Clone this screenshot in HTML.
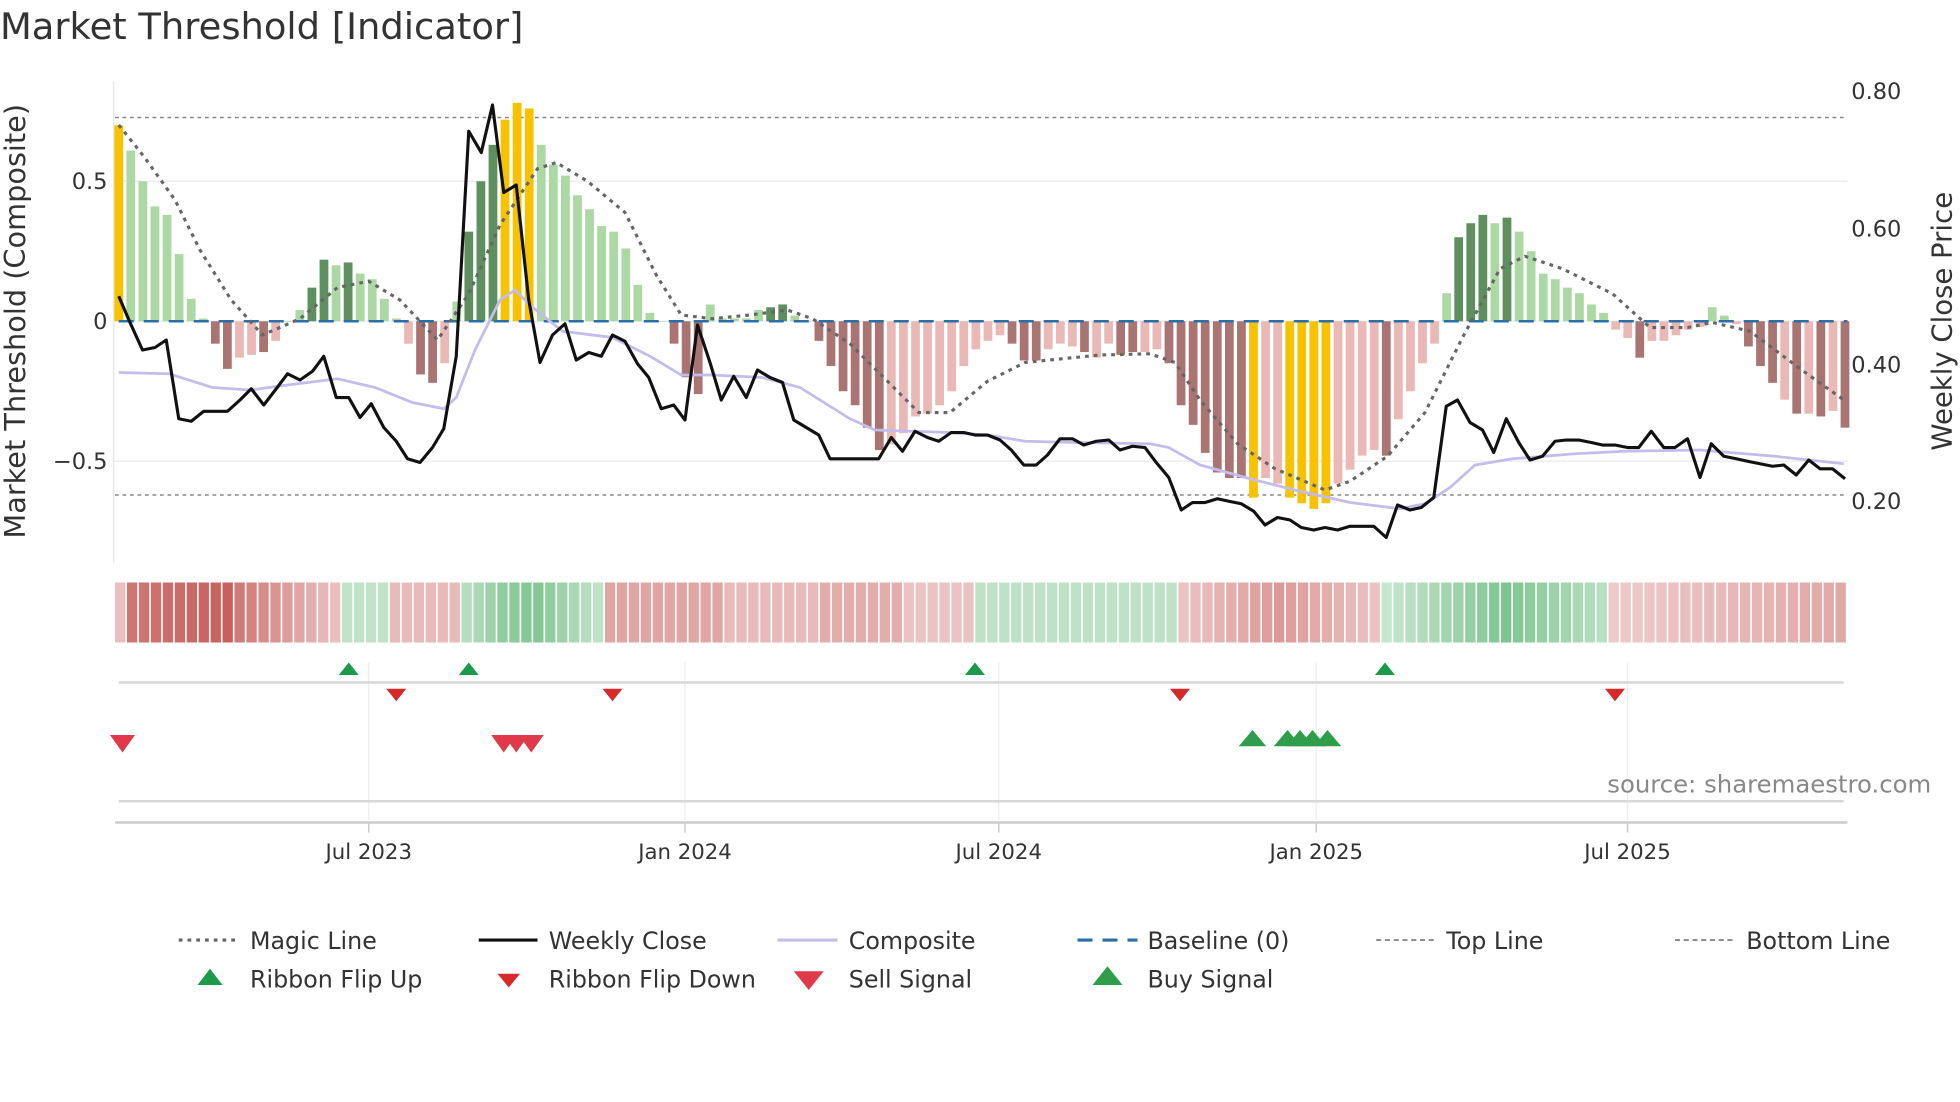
<!DOCTYPE html>
<html><head><meta charset="utf-8"><style>
html,body{margin:0;padding:0;background:#fff;}
svg{display:block;font-family:"DejaVu Sans","Liberation Sans",sans-serif;}
</style></head><body>
<svg id="s" width="1960" height="1102" viewBox="0 0 1568 881.6" xmlns="http://www.w3.org/2000/svg">
<text x="0" y="31" font-size="29.5" fill="#333">Market Threshold [Indicator]</text>
<g id="grid"></g>
<g id="bars"></g>
<g id="lines"></g>
<g id="rib"></g>
<g id="mk"></g>
<text x="20" y="257" font-size="23" fill="#333" text-anchor="middle" transform="rotate(-90 20 257)">Market Threshold (Composite)</text>
<text x="1561" y="257" font-size="22" fill="#333" text-anchor="middle" transform="rotate(-90 1561 257)">Weekly Close Price</text>
<g font-size="18" fill="#333" text-anchor="end">
<text x="86" y="151">0.5</text><text x="86" y="263">0</text><text x="86" y="375">−0.5</text>
</g>
<g font-size="18" fill="#333">
<text x="1481" y="79">0.80</text><text x="1481" y="189">0.60</text><text x="1481" y="298">0.40</text><text x="1481" y="407">0.20</text>
</g>
<g font-size="17" fill="#333" text-anchor="middle">
<text x="295" y="687">Jul 2023</text><text x="548" y="687">Jan 2024</text><text x="799" y="687">Jul 2024</text><text x="1053" y="687">Jan 2025</text><text x="1302" y="687">Jul 2025</text>
</g>
<text x="1545" y="634" font-size="19.5" fill="#888" text-anchor="end">source: sharemaestro.com</text>
<g font-size="19" fill="#333">
<line x1="143" y1="752" x2="188" y2="752" stroke="#666" stroke-width="2.5" stroke-dasharray="3,4"/><text x="200" y="759">Magic Line</text>
<line x1="383" y1="752" x2="430" y2="752" stroke="#111" stroke-width="2.5"/><text x="439" y="759">Weekly Close</text>
<line x1="622" y1="752" x2="670" y2="752" stroke="#c3bcec" stroke-width="2.5"/><text x="679" y="759">Composite</text>
<line x1="862" y1="752" x2="910" y2="752" stroke="#2a6fa8" stroke-width="2.5" stroke-dasharray="12,8"/><text x="918" y="759">Baseline (0)</text>
<line x1="1101" y1="752" x2="1148" y2="752" stroke="#888" stroke-width="1.5" stroke-dasharray="4,3"/><text x="1157" y="759">Top Line</text>
<line x1="1340" y1="752" x2="1388" y2="752" stroke="#888" stroke-width="1.5" stroke-dasharray="4,3"/><text x="1397" y="759">Bottom Line</text>
<polygon points="158,788 168,775 178,788" fill="#1a9a4a"/><text x="200" y="790">Ribbon Flip Up</text>
<polygon points="398,779 416,779 407,790" fill="#d62a2a"/><text x="439" y="790">Ribbon Flip Down</text>
<polygon points="635,777 659,777 647,792" fill="#e03a4a"/><text x="679" y="790">Sell Signal</text>
<polygon points="874,788 886,773 898,788" fill="#2e9e4a"/><text x="918" y="790">Buy Signal</text>
</g>
</svg>
<script>
const NS="http://www.w3.org/2000/svg";
function el(g,t,a){const e=document.createElementNS(NS,t);for(const k in a)e.setAttribute(k,a[k]);document.getElementById(g).appendChild(e);return e;}
[145,257,369].forEach(y=>el("grid","line",{x1:92,x2:1478,y1:y,y2:y,stroke:"#eceef2","stroke-width":1.2}));
el("grid","line",{x1:91,x2:91,y1:65,y2:450,stroke:"#e6e6e6","stroke-width":1});
[295,548,799,1053,1302].forEach(x=>{el("grid","line",{x1:x,x2:x,y1:530,y2:656,stroke:"#eeeeee","stroke-width":1});el("grid","line",{x1:x,x2:x,y1:658,y2:666,stroke:"#ccc","stroke-width":1.2});});
el("grid","line",{x1:92,x2:1478,y1:94,y2:94,stroke:"#888","stroke-width":1.2,"stroke-dasharray":"3,3"});
el("grid","line",{x1:92,x2:1478,y1:396,y2:396,stroke:"#888","stroke-width":1.2,"stroke-dasharray":"3,3"});
const B="0.7y 0.61l 0.5l 0.41l 0.38l 0.24l 0.08l 0.01l -0.08d -0.17d -0.13r -0.12r -0.11d -0.07r 0l 0.04l 0.12g 0.22g 0.2l 0.21g 0.17l 0.15l 0.08l 0.01l -0.08r -0.19d -0.22d -0.15r 0.07l 0.32g 0.5g 0.63g 0.72y 0.78y 0.76y 0.63l 0.56l 0.52l 0.45l 0.4l 0.34l 0.32l 0.26l 0.13l 0.03l 0l -0.08d -0.2d -0.26d 0.06l 0.01l 0.01l 0.01l 0.04l 0.05g 0.06g 0.02l 0l -0.07d -0.16d -0.25d -0.3d -0.38d -0.46d -0.44r -0.4r -0.34r -0.33r -0.3r -0.25r -0.16r -0.1r -0.07r -0.05r -0.08d -0.14d -0.14d -0.1r -0.08r -0.09r -0.11d -0.13r -0.08r -0.12d -0.11d -0.11r -0.1r -0.15d -0.3d -0.37d -0.47d -0.54d -0.56d -0.56d -0.63y -0.56r -0.58r -0.63y -0.65y -0.67y -0.65y -0.58r -0.53r -0.48r -0.46r -0.48d -0.35r -0.25r -0.15r -0.08r 0.1l 0.3g 0.35g 0.38g 0.35l 0.37g 0.32l 0.25l 0.17l 0.15l 0.12l 0.1l 0.06l 0.03l -0.03r -0.06r -0.13d -0.07r -0.07r -0.05r -0.03r -0.02r 0.05l 0.02l -0.01r -0.09d -0.16d -0.22d -0.28r -0.33d -0.33r -0.34d -0.32r -0.38d".split(" ");
const C={y:"#f7c200",l:"#acd8a4",g:"#5e8f5e",d:"#a97472",r:"#eab9b5"};
const n=B.length, st=(1476-95)/(n-1);
B.forEach((b,i)=>{const v=parseFloat(b),c=b.slice(-1);const x=95+st*i;const h=Math.abs(v)*224;
 el("bars","rect",{x:x-3.5,y:v>=0?257-h:257,width:7,height:Math.max(h,0.5),fill:C[c]});});
el("bars","line",{x1:95,x2:1478,y1:257,y2:257,stroke:"#2a6fa8","stroke-width":2,"stroke-dasharray":"12,8"});
function pl(pts,a){el("lines","polyline",Object.assign({points:pts,fill:"none"},a));}
pl("95,100 115,125 140,160 160,200 185,240 210,268 240,255 270,230 295,225 320,240 350,272 375,235 400,180 430,135 445,130 470,145 500,170 525,220 545,252 570,255 600,252 630,248 650,255 680,275 710,305 735,330 760,330 790,305 820,290 850,287 880,284 920,283 940,290 960,320 990,355 1020,375 1060,392 1080,385 1110,365 1140,330 1170,270 1200,215 1220,205 1250,215 1290,235 1320,262 1350,262 1370,258 1400,265 1440,295 1475,320",{stroke:"#666","stroke-width":2.5,"stroke-dasharray":"3,4"});
pl("95,298 135,299 170,310 200,312 230,308 270,303 300,310 330,322 355,327 365,318 380,280 400,240 412,232 425,245 450,265 490,270 520,285 545,300 570,300 610,302 640,310 680,335 700,344 760,346 790,348 820,353 860,354 920,355 935,358 960,372 1000,383 1040,393 1080,402 1120,407 1140,403 1160,390 1180,372 1210,367 1260,363 1300,361 1360,360 1420,365 1475,371",{stroke:"#c3bcec","stroke-width":2.2});
pl("95,237 104,258 114,280 124,278 133,272 143,335 153,337 163,329 182,329 192,320 201,311 211,324 221,311 230,299 240,304 250,297 259,285 269,318 279,318 288,334 297,323 307,342 317,353 326,367 336,370 346,358 355,343 365,285 375,105 385,122 394,84 403,154 413,148 423,240 432,290 442,268 452,259 461,288 471,282 481,285 490,268 500,273 510,291 519,302 529,327 539,324 548,336 558,260 568,290 577,320 587,301 597,318 606,296 616,302 626,306 635,336 645,342 655,348 664,367 674,367 684,367 693,367 703,367 713,350 722,361 732,345 742,350 751,353 761,346 771,346 780,348 790,348 800,352 809,360 819,372 829,372 838,364 848,351 858,351 867,356 877,353 887,352 896,360 906,357 916,358 925,370 935,382 945,408 954,402 964,402 974,399 983,401 993,403 1003,409 1012,420 1022,414 1032,416 1041,422 1051,424 1060,422 1070,424 1080,421 1089,421 1099,421 1109,430 1118,404 1128,408 1137,406 1147,398 1157,325 1166,320 1176,338 1186,344 1195,362 1205,335 1215,354 1224,368 1234,365 1244,353 1253,352 1263,352 1273,354 1282,356 1292,356 1302,358 1311,358 1321,345 1331,358 1340,358 1350,351 1360,382 1369,355 1379,365 1389,367 1398,369 1408,371 1418,373 1427,372 1437,380 1447,368 1456,375 1466,375 1476,383",{stroke:"#111","stroke-width":2.5,"stroke-linejoin":"round"});
function rv(i){
 if(i==0)return -0.2; if(i<=9)return -0.75-0.02*i; if(i<=18)return -0.8+(i-9)*0.066;
 if(i<=22)return 0.2; if(i<=28)return -0.25;
 if(i<=40){const p=[0.3,0.4,0.5,0.6,0.65,0.7,0.7,0.6,0.5,0.4,0.3,0.2];return p[i-29];}
 if(i<=71){if(i<=50)return -0.4; if(i<=58)return -0.25; if(i<=65)return -0.35; return -0.18;}
 if(i<=88)return 0.22;
 if(i<=105){const m=Math.abs(i-97);return -0.5+m*0.04;}
 if(i<=124){const m=Math.abs(i-116);return 0.75-m*0.06;}
 return -0.12-(i-125)*0.014;
}
function mix(a,b,t){return "rgb("+a.map((v,k)=>Math.round(v+(b[k]-v)*t)).join(",")+")";}
const rn=145, rs=(1478-92)/rn;
for(let i=0;i<rn;i++){const v=rv(i);const t=Math.min(1,Math.abs(v));
 const f=v<0?mix([244,218,218],[194,88,84],t):mix([216,238,220],[96,184,120],t);
 el("rib","rect",{x:92+i*rs,y:466,width:rs-1.3,height:48,fill:f});}
el("mk","line",{x1:95,x2:1475,y1:546,y2:546,stroke:"#d8d8d8","stroke-width":2});
el("mk","line",{x1:95,x2:1475,y1:641,y2:641,stroke:"#d8d8d8","stroke-width":2});
el("mk","line",{x1:92,x2:1478,y1:658,y2:658,stroke:"#cccccc","stroke-width":2});
[279,375,780,1108].forEach(x=>el("mk","polygon",{points:`${x-8},540 ${x},530 ${x+8},540`,fill:"#1a9a4a"}));
[317,490,944,1292].forEach(x=>el("mk","polygon",{points:`${x-8},551 ${x+8},551 ${x},561`,fill:"#d62a2a"}));
[98,403,413,425].forEach(x=>el("mk","polygon",{points:`${x-10},588 ${x+10},588 ${x},602`,fill:"#e03a4a"}));
[1002,1030,1040,1050,1062].forEach(x=>el("mk","polygon",{points:`${x-11},597 ${x},584 ${x+11},597`,fill:"#2e9e4a"}));
</script>
</body></html>
